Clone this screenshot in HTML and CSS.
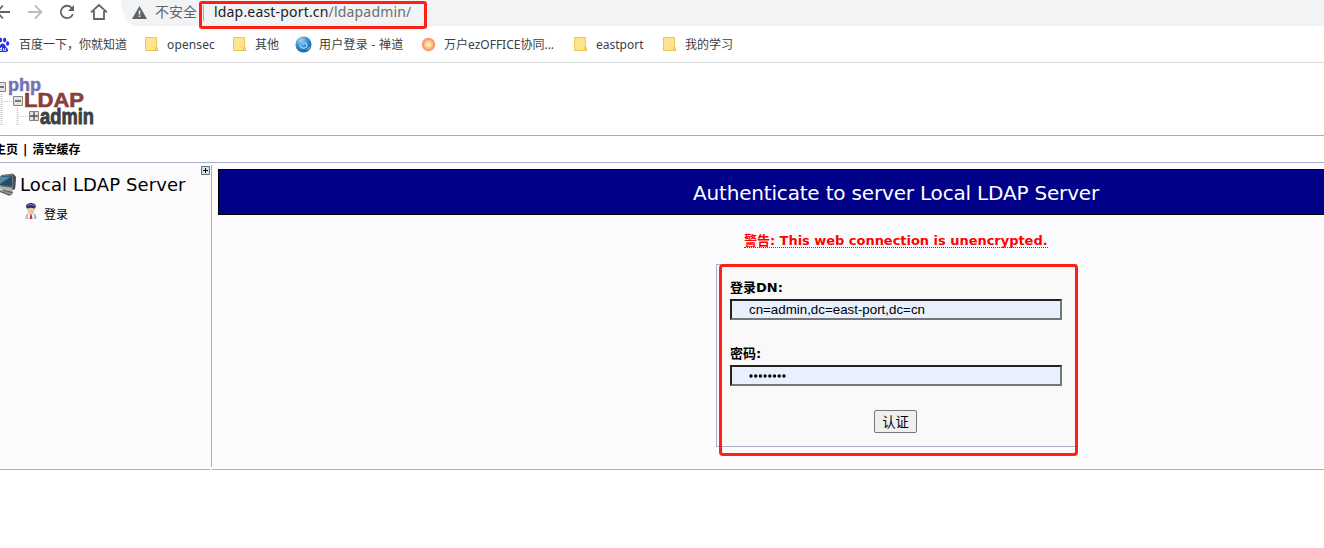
FILE: index.html
```html
<!DOCTYPE html>
<html lang="zh-CN">
<head>
<meta charset="utf-8">
<title>phpLDAPadmin</title>
<link rel="stylesheet" href="styles.css">
</head>
<body>
<svg class="defs" width="0" height="0">
  <symbol id="folder" viewBox="0 0 13 15"><path d="M.5.5h11v10l1 1v2h-12z" fill="#ffe48d" stroke="#ebc74f"/><path d="M10.500 13.500v-3l1-1 1 1v3z" fill="#ffe48d" stroke="#e3b93c" stroke-width=".8"/></symbol>
</svg>
<div class="toolbar">
  <svg class="nav" width="121" height="26" fill="none" stroke="#5f6368" stroke-width="1.8">
    <path d="M10 12H-2M3 5.500L-3 12L3 18.500"/>
    <path d="M28 12H41M35 5.500L41.500 12L35 18.500" stroke="#bbbdbf"/>
    <path d="M72 8.200A6.200 6.200 0 1 0 72.900 14"/><path d="M74 5v6h-6z" fill="#5f6368" stroke="none"/>
    <path d="M91 12.300L99 5L107 12.300M94 11v8h10v-8"/>
  </svg>
  <div class="address">
    <svg class="warn" width="15" height="13" viewBox="0 0 15 13"><path d="M7.500 0L15 13H0z" fill="#5f6368"/><path d="M7.500 4.500v4M7.500 9.500v1.600" stroke="#f1f3f4" stroke-width="1.500"/></svg>
    <span class="insecure">不安全</span>
    <div class="url"><span class="bar"></span><span class="host">ldap.east-port.cn<i>/ldapadmin/</i></span></div>
  </div>
</div>
<div class="bookmarks">
  <div class="bm b1"><svg width="15" height="16" viewBox="0 0 15 16" fill="#2932e1"><ellipse cx="2.500" cy="6.500" rx="1.700" ry="2.300"/><ellipse cx="5.600" cy="3" rx="1.600" ry="2.300"/><ellipse cx="9.700" cy="3" rx="1.600" ry="2.300"/><ellipse cx="12.600" cy="6.500" rx="1.600" ry="2.200"/><path d="M7.500 6.500c2.500 0 3 3 4.500 4.500s1.500 4-1 4-5 0-7 0-3-2.500-1-4 2.500-4.500 4.500-4.500z"/><path d="M6.500 10v3.500H5v-2h1.500M8.500 11v2.500h2V11" fill="none" stroke="#fff" stroke-width=".8"/></svg><span>百度一下，你就知道</span></div>
  <div class="bm b2"><svg width="13" height="15"><use href="#folder"/></svg><span>opensec</span></div>
  <div class="bm b3"><svg width="13" height="15"><use href="#folder"/></svg><span>其他</span></div>
  <div class="bm b4"><svg width="17" height="17" viewBox="0 0 17 17"><defs><radialGradient id="globe" cx=".35" cy=".25" r=".75"><stop offset="0" stop-color="#a5d3f2"/><stop offset=".5" stop-color="#3c92cf"/><stop offset="1" stop-color="#1463a5"/></radialGradient></defs><circle cx="8.500" cy="8.500" r="8" fill="url(#globe)"/><path d="M5 9Q6 12.500 9.500 12Q13 11 11.500 8Q9.500 6 8 8.500" fill="none" stroke="#8fd3f6" stroke-width="1.500"/><path d="M12 14l3-3" stroke="#57b6ea" stroke-width="1.500"/></svg><span>用户登录 - 禅道</span></div>
  <div class="bm b5"><svg width="15" height="15" viewBox="0 0 15 15"><circle cx="7.500" cy="7.500" r="6" fill="#ff9a6a" stroke="#f99a80" stroke-width="1.500"/><circle cx="7.500" cy="7.500" r="4.500" fill="#ffc47c"/><circle cx="7.500" cy="7.500" r="2.500" fill="#fff0b4"/></svg><span>万户ezOFFICE协同...</span></div>
  <div class="bm b6"><svg width="13" height="15"><use href="#folder"/></svg><span>eastport</span></div>
  <div class="bm b7"><svg width="13" height="15"><use href="#folder"/></svg><span>我的学习</span></div>
</div>
<header class="brand">
  <svg width="120" height="71" viewBox="0 64 120 71">
    <g stroke="#c8c8c8" stroke-dasharray="1 1" stroke-width="2"><path d="M1.500 94v32M17.500 108v18"/><path d="M3 101.500h9M19 116.500h10" stroke-width="1"/></g>
    <g fill="#e4e4e4" stroke="#858585"><path d="M-3.500 82.500h9v9h-9zM13.500 96.500h9v9h-9zM29.500 111.500h9v9h-9z"/></g>
    <path d="M-2 87h6M15 101h6M30 116h8M34 112v8" stroke="#505050" stroke-width="1.300"/>
    <g class="logo" stroke-linejoin="round">
      <text x="8" y="91" font-size="17.500" textLength="33" lengthAdjust="spacingAndGlyphs" fill="#7373b5" stroke="#7373b5" stroke-width=".5">php</text>
      <text x="24" y="107" font-size="20" textLength="60" lengthAdjust="spacingAndGlyphs" fill="#8b3d3d" stroke="#8b3d3d" stroke-width=".6">LDAP</text>
      <text x="40" y="124" font-size="22.500" textLength="54" lengthAdjust="spacingAndGlyphs" fill="#3d3f40" stroke="#3d3f40" stroke-width=".9">admin</text>
    </g>
  </svg>
</header>
<nav class="menu"><span class="home">主页</span><span class="sep">|</span><span>清空缓存</span></nav>
<main class="main">
  <aside class="side">
    <div class="server">
      <svg width="20" height="26" viewBox="0 0 20 26"><path d="M1 3L13 1.500L16 5L15 17L10 19L0 17z" fill="#6d7679"/><path d="M0 4.500L12 3.500V14.500L0 13z" fill="#234e68"/><path d="M0 5L11 4.500L0 12z" fill="#5988a0"/><path d="M13 2L16 5L15 17L13 18z" fill="#485052"/><path d="M0 14.500L12 16V19L0 17z" fill="#b4b8b4"/><path d="M0 18L13 19L12 23L9 24L0 20z" fill="#929890"/><path d="M0 19.500L10 23M3 18L13 21" stroke="#535b57"/></svg>
      <span>Local LDAP Server</span>
    </div>
    <div class="login">
      <svg width="12" height="17" viewBox="0 0 12 17"><path d="M.5 16Q0 10.500 4 10H8Q12 10.500 11.500 16z" fill="#b7bac9"/><path d="M3 10L6 12L9 10V16H3z" fill="#f4f4fa"/><path d="M5.300 11.500h1.400l.7 4.500h-2.800z" fill="#e02c35"/><circle cx="6" cy="7" r="3.700" fill="#efc5a2"/><path d="M.8 3Q2 0 6 0t5 3l-1.200 2.700Q6 4 2 5.700z" fill="#27306c"/><path d="M2 2.500Q6 .5 10 2.500" fill="none" stroke="#7380c0"/></svg>
      <span>登录</span>
    </div>
    <svg class="expand" width="9" height="9"><path d="M.5.500h8v8h-8z" fill="#d6e4e6" stroke="#667075"/><path d="M2 4.500h5M4.500 2v5" stroke="#000"/></svg>
  </aside>
  <section class="content">
    <h1><span>Authenticate to server Local LDAP Server</span></h1>
    <div class="notice"><span>警告: This web connection is unencrypted.</span></div>
    <form class="form">
      <label>登录DN:</label>
      <div class="field"><span class="dn">cn=admin,dc=east-port,dc=cn</span></div>
      <label>密码:</label>
      <div class="field"><svg width="40" height="6"><path d="M2 3h37" stroke="#000" stroke-width="3.400" stroke-linecap="round" stroke-dasharray="0 4.700"/></svg></div>
      <button type="button">认证</button>
      <div class="mark"></div>
    </form>
  </section>
</main>
<div class="foot"><i></i><b></b></div>
</body>
</html>
```

FILE: styles.css
```css
* { box-sizing: border-box; }
body { margin: 0; width: 1324px; height: 548px; overflow: hidden; background: #fff; color: #000; font: 12px/16px "DejaVu Sans", "Noto Sans CJK SC", sans-serif; }
svg { display: block; flex: none; }
span { white-space: nowrap; }
.defs { position: absolute; }
.toolbar { display: flex; height: 27px; }
.nav { overflow: hidden; }
.address { flex: 1; display: flex; align-items: flex-start; height: 26px; padding-left: 11px; background: #f1f3f4; border-radius: 0 0 0 16px / 0 0 0 26px; font-family: "Noto Sans", "Noto Sans CJK SC", sans-serif; }
.warn { margin-top: 6px; }
.insecure { width: 44px; margin: 4px 0 0 8px; font-size: 14px; line-height: 16px; color: #5f6368; }
.url { display: flex; width: 228px; height: 28px; padding: 0; border: 3px solid #fe2015; border-radius: 3px; margin-top: 1px; }
.bar { width: 1px; height: 16px; margin: 1px 0 0 1px; background: #a9acb0; }
.host { margin: -2px 0 0 10px; font-size: 14px; line-height: 20px; color: #202124; letter-spacing: .18px; }
.host i { color: #6b6f73; font-style: normal; }
.bookmarks { display: flex; align-items: center; height: 36px; border-bottom: 1px solid #d9dbdd; font-family: "Noto Sans", "Noto Sans CJK SC", sans-serif; color: #3c4043; }
.bm { display: flex; align-items: center; flex: none; }
.bm span { line-height: 18px; }
.b1 { width: 149px; margin-left: -5px; gap: 9px; }
.b2, .b3, .b6, .b7 { gap: 9px; }
.b2 { width: 88px; margin-left: 1px; letter-spacing: .12px; }
.b3 { width: 62px; }
.b4 { width: 126px; gap: 7px; letter-spacing: .28px; }
.b5 { width: 153px; gap: 8px; }
.b6 { width: 89px; }
.brand { height: 73px; padding-top: 1px; border-bottom: 1px solid #aaaacc; }
.logo { font-family: "Liberation Sans", sans-serif; font-weight: bold; }
.menu { display: flex; align-items: center; gap: 5px; height: 27px; padding-top: 2px; border-bottom: 1px solid #aaaacc; font-weight: bold; }
.home { margin-left: -6px; }
.main { display: flex; height: 304px; padding-top: 2px; background: #fcfcfe; }
.side { flex: none; position: relative; width: 212px; height: 302px; border-right: 1px solid #aaaacc; }
.server { display: flex; height: 38px; padding-top: 7px; }
.server span { font-size: 18px; line-height: 25px; letter-spacing: .1px; }
.login { display: flex; gap: 7px; padding-left: 25px; }
.login span { margin-top: 4px; }
.expand { position: absolute; left: 201px; top: 1px; }
.content { flex: 1; min-width: 0; padding: 4px 0 0 6px; }
h1 { height: 46px; margin: 0; padding-left: 474px; border: 1px solid #000; border-right: 0; background: #000088; color: #fff; font-size: 20px; font-weight: normal; line-height: 46px; letter-spacing: -.18px; }
.notice { display: flex; height: 49px; padding: 17px 0 0 526px; color: #f00; font-size: 13px; font-weight: bold; }
.notice span { height: 16px; border-bottom: 1px dotted #f00; line-height: 18px; letter-spacing: -.03px; }
.form { position: relative; width: 361px; height: 183px; margin-left: 498px; padding: 15px 15px 0 13px; border: 1px solid #aaaacc; background: #f9f9f9; }
label { display: block; height: 19px; font-size: 13px; font-weight: bold; line-height: 16px; }
.field { display: flex; align-items: center; width: 332px; height: 21px; margin-bottom: 26px; padding-left: 17px; border: 2px solid; border-color: #222 #767676 #767676 #222; background: #e8f0fe; }
.dn { font: 13.333px/17px "Liberation Sans", sans-serif; }
button { display: block; width: 43px; height: 23px; margin: -2px 0 0 144px; padding: 0; border: 1px solid #767676; border-radius: 2px; background: #efefef; color: #000; font: 13.333px/20px "Noto Sans CJK SC", sans-serif; }
.mark { position: absolute; left: 2px; top: -1px; width: 359px; height: 192px; border: 3px solid #fe2015; border-radius: 4px; }
.foot { display: flex; gap: 2px; padding-top: 2px; background: #fff; }
.foot i { width: 210px; height: 1px; background: #aaaacc; }
.foot b { flex: 1; height: 1px; background: #aaaacc; }
```
